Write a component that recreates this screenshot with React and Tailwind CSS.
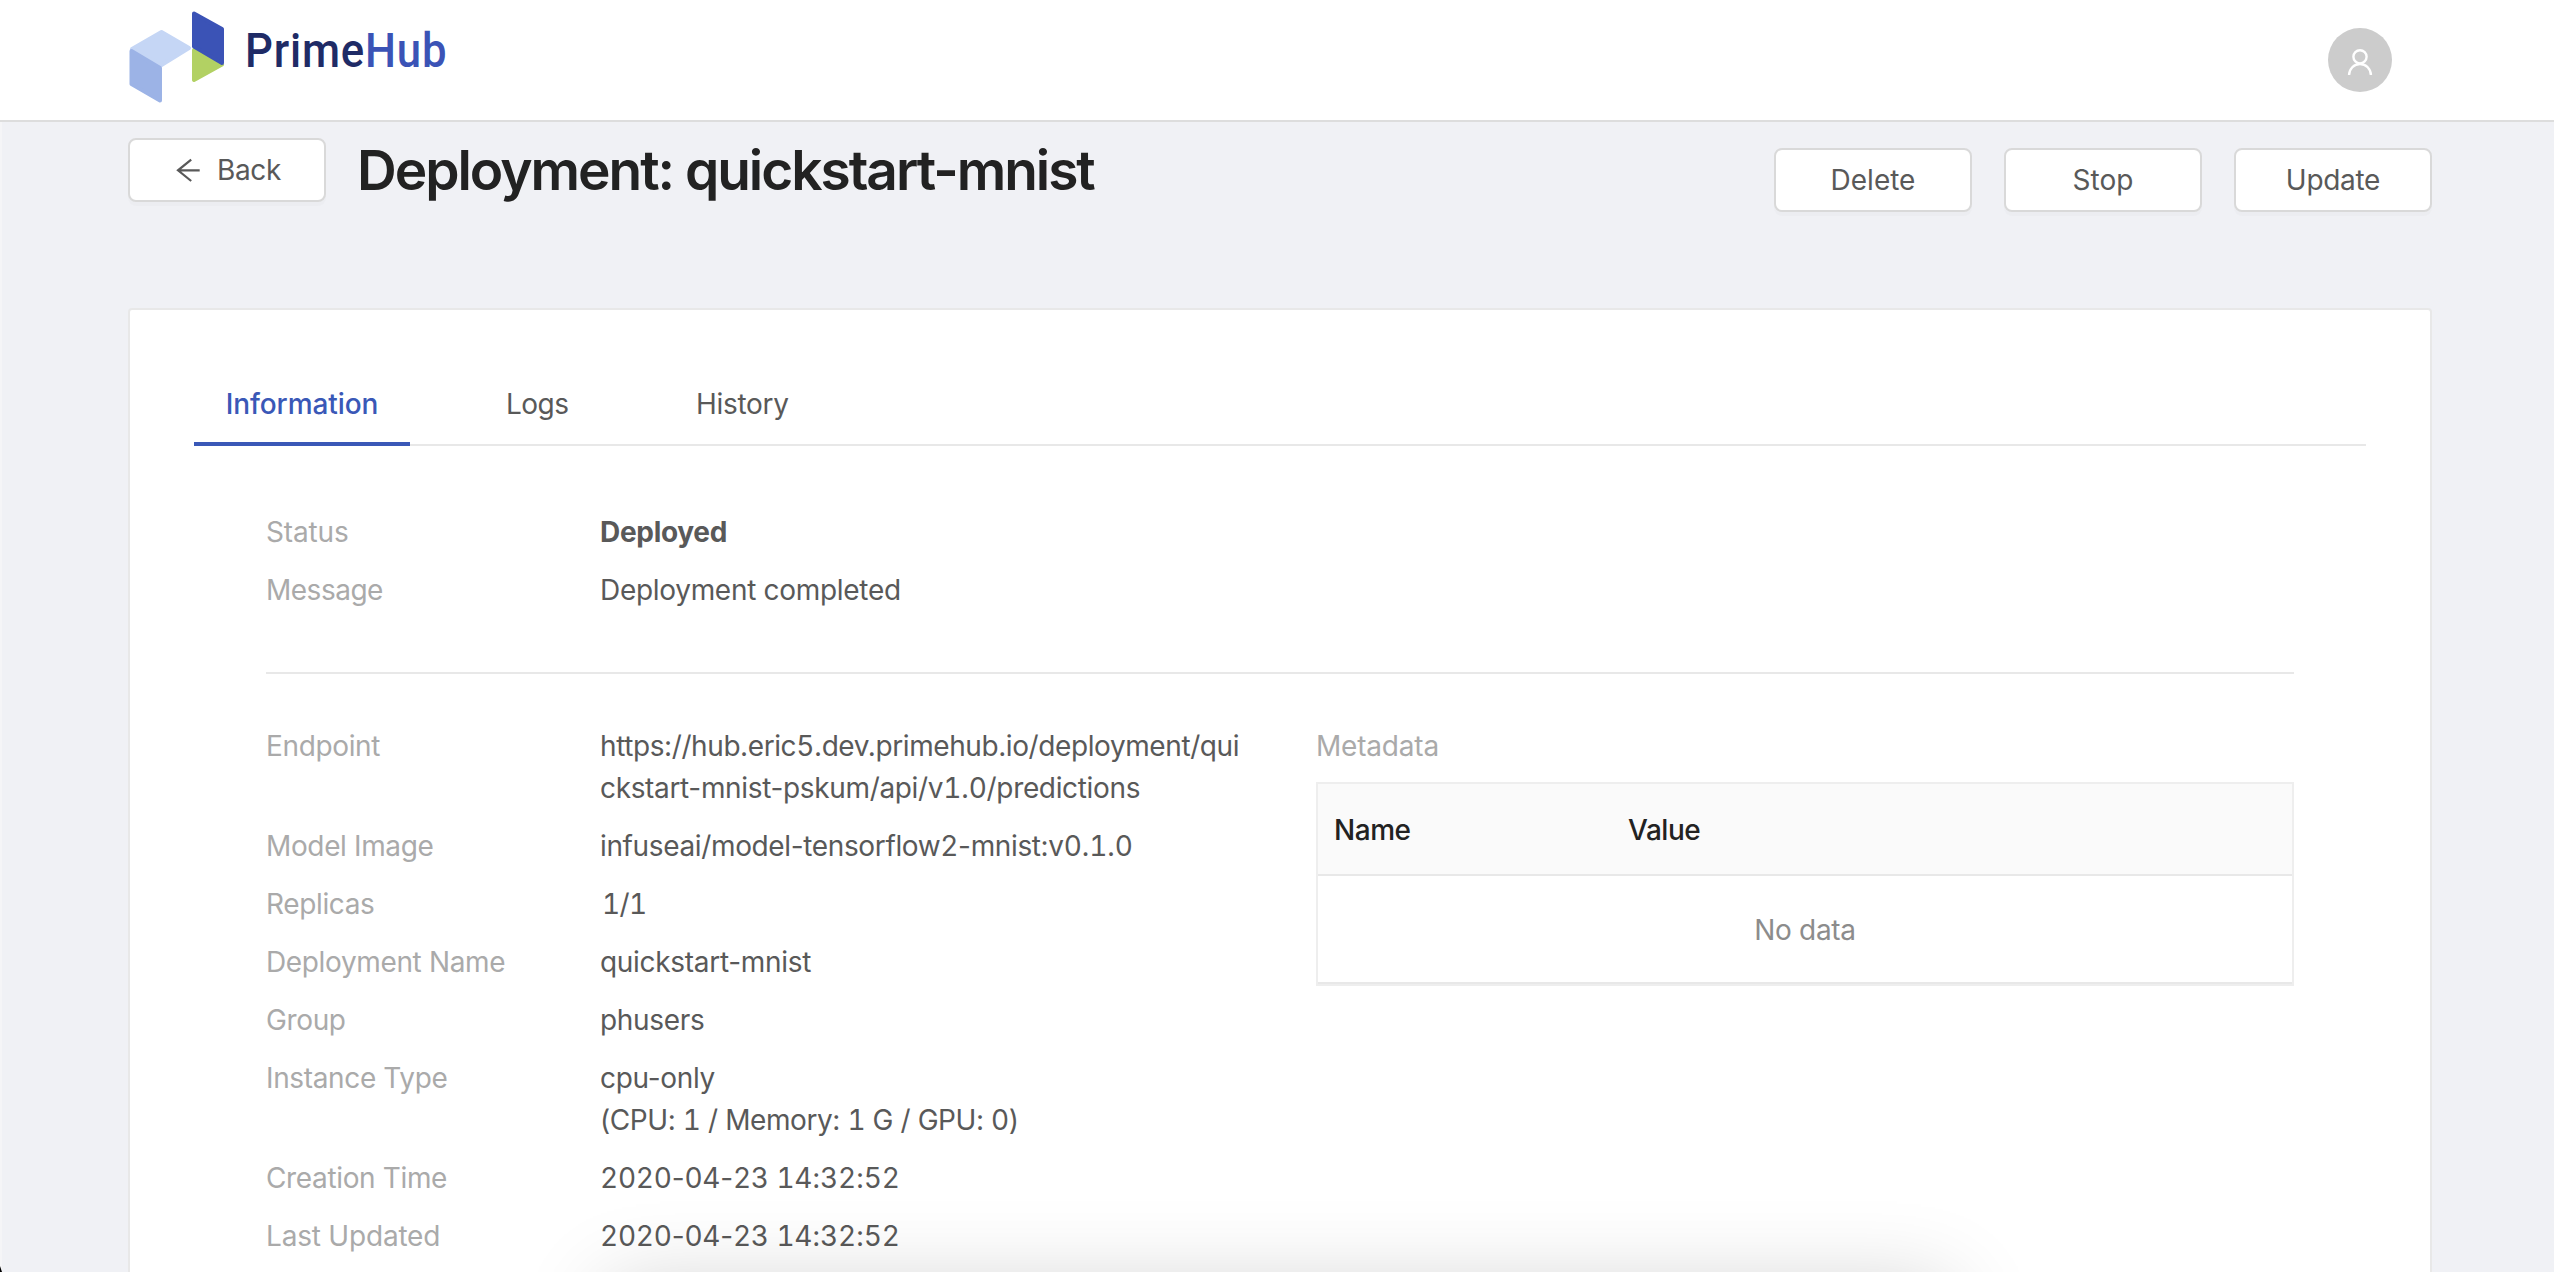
import React from "react";

const information = [
  {
    label: "Endpoint",
    lines: ["https://hub.eric5.dev.primehub.io/deployment/qui", "ckstart-mnist-pskum/api/v1.0/predictions"],
    spacing: ["tracking-[-0.41px]", "tracking-[-0.34px]"],
  },
  { label: "Model Image", lines: ["infuseai/model-tensorflow2-mnist:v0.1.0"], spacing: ["tracking-[-0.36px]"] },
  { label: "Replicas", lines: ["1/1"], spacing: ["tracking-[-0.6px] pl-0.5"] },
  { label: "Deployment Name", lines: ["quickstart-mnist"] },
  { label: "Group", lines: ["phusers"] },
  { label: "Instance Type", lines: ["cpu-only", "(CPU: 1 / Memory: 1 G / GPU: 0)"], spacing: ["", "tracking-[-0.42px]"] },
  { label: "Creation Time", lines: ["2020-04-23 14:32:52"], spacing: ["tracking-[-0.23px]"] },
  { label: "Last Updated", lines: ["2020-04-23 14:32:52"], spacing: ["tracking-[-0.23px]"], labelSpacing: "tracking-[-0.2px]" },
];

function Logo() {
  return (
    <div className="flex h-[120px]">
      <svg className="h-[120px] w-[110px]" viewBox="0 0 110 120">
        <g strokeWidth="4" strokeLinejoin="round">
          <path d="M33.500 32 L61 48 L33.500 65 L4 49 Z" fill="#c5d6f5" stroke="#c5d6f5" />
          <path d="M3.500 51 L32 68 V100.500 L3.500 84 Z" fill="#9cb3e6" stroke="#9cb3e6" />
          <path d="M66 50 L94 64.500 L66 80 Z" fill="#b2d163" stroke="#b2d163" />
          <path d="M66 13.500 L94 29 V63 L66 46.500 Z" fill="#3b53b6" stroke="#3b53b6" />
        </g>
      </svg>
      <div className="ml-[7px] mt-[19px] origin-left scale-x-[0.91] font-['Roboto',sans-serif] text-[48px] font-medium leading-[64px] tracking-[0.9px] text-[#1f2b66]">
        Prime<span className="text-[#3b53b6]">Hub</span>
      </div>
    </div>
  );
}

function Button({ children }) {
  return (
    <button className="flex h-16 w-[198px] items-center justify-center rounded-lg border-2 border-[#d9d9d9] bg-white shadow-[0_4px_0_rgba(0,0,0,0.015)]">
      {children}
    </button>
  );
}

// Digits take equal widths; the other characters keep their natural ones.
function Value({ text }) {
  return text.split(/(\d+)/).map((part, i) =>
    i % 2 ? <span key={i} className="tabular-nums">{part}</span> : part
  );
}

function Row({ label, lines, bold, spacing = [], labelSpacing = "tracking-[-0.36px]" }) {
  return (
    <div className="flex pb-4">
      <div className={`w-[334px] text-[#aaaaaa] ${labelSpacing}`}>{label}</div>
      <div className={bold ? "font-bold" : ""}>
        {lines.map((line, i) => (
          <div key={line} className={`whitespace-nowrap ${spacing[i] || ""}`}><Value text={line} /></div>
        ))}
      </div>
    </div>
  );
}

export default function App() {
  return (
    <div className="relative h-[1272px] w-[2554px] overflow-hidden bg-[#f0f1f5] font-['Inter',sans-serif] text-[28px] leading-[42px] tracking-[-0.3px] text-[#595959]">
      <header className="flex h-[122px] items-start justify-between border-b-2 border-[#dddddd] bg-white pl-[128px] pr-[162px]">
        <Logo />
        <div className="mt-7 flex size-16 items-center justify-center rounded-full bg-[#cccccc]">
          <svg className="mt-1 size-7" viewBox="0 0 28 28" fill="none" stroke="#ffffff" strokeWidth="2.400">
            <circle cx="14" cy="8.800" r="6.600" />
            <path d="M3.100 27 A10.900 11 0 0 1 24.900 27" />
          </svg>
        </div>
      </header>

      <div className="flex h-[186px] pl-[128px] pr-[122px]">
        <div className="pt-4">
          <Button>
            <svg className="mr-4 size-7" viewBox="0 0 28 28" fill="none" stroke="#595959" strokeWidth="2.200">
              <path d="M26.700 14.300 H5 M18.200 3.600 L5 14.300 L18.200 25" />
            </svg>
            <span>Back</span>
          </Button>
        </div>
        <h1 className="ml-[31px] mt-2 text-[55px] font-semibold leading-[80px] tracking-[-2.03px] text-[#222222]">Deployment: quickstart-mnist</h1>
        <div className="ml-auto flex gap-8 pt-[26px]">
          <Button><span className="tracking-normal">Delete</span></Button>
          <Button><span className="tracking-normal">Stop</span></Button>
          <Button><span>Update</span></Button>
        </div>
      </div>

      <main className="ml-[128px] h-[1100px] w-[2304px] rounded border-2 border-[#e8e8e8] bg-white px-16 pt-[52px]">
        <nav className="flex h-[84px] border-b-2 border-[#e8e8e8]">
          <div className="mr-16 flex h-[84px] w-[216px] justify-center border-b-4 border-[#3a58b7] pt-[21px] font-medium tracking-[-0.1px] text-[#3a58b7]">Information</div>
          <div className="ml-8 w-[158px] pt-[21px] tracking-[-0.5px]">Logs</div>
          <div className="ml-8 pt-[21px]">History</div>
        </nav>
        <div className="px-[72px]">
          <section className="h-[228px] border-b-2 border-[#e8e8e8] pt-[65px]">
            <Row label="Status" labelSpacing="tracking-[-0.14px]" lines={["Deployed"]} bold />
            <Row label="Message" labelSpacing="tracking-[-0.5px]" lines={["Deployment completed"]} />
          </section>
          <div className="flex pt-[51px]">
            <section className="w-[1050px]">
              {information.map((row) => <Row key={row.label} {...row} />)}
            </section>
            <section className="w-[978px]">
              <div className="tracking-[-0.2px] text-[#aaaaaa]">Metadata</div>
              <div className="mt-[15px] border-2 border-[#eeeeee]">
                <div className="flex h-[92px] items-center border-b-2 border-[#e8e8e8] bg-[#fafafa] pt-0.5 font-medium tracking-[-0.45px] text-[#222222]">
                  <div className="w-[310px] pl-4">Name</div>
                  <div>Value</div>
                </div>
                <div className="flex h-[108px] items-center justify-center border-b-2 border-[#e8e8e8] pt-0.5 text-[#8c8c8c]">No data</div>
              </div>
            </section>
          </div>
        </div>
      </main>

      {/* Shadow cast by the panel below the window edge */}
      <div className="absolute left-[607px] top-[1287px] h-[400px] w-[1343px] shadow-[0_0_82px_rgba(0,0,0,0.19)]" />
      {/* Window edge and its rounded corner */}
      <div className="absolute left-0 top-[122px] h-[1150px] w-0.5 bg-[#f5f5f7]" />
      <svg className="absolute bottom-0 left-0 h-1.5 w-0.5" viewBox="0 0 2 6">
        <path d="M0 0 L2 6 H0 Z" fill="#000000" />
      </svg>
    </div>
  );
}
